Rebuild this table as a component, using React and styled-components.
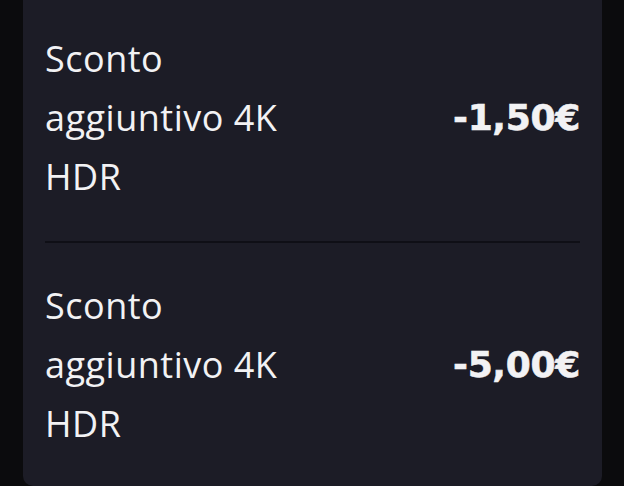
import React from "react";
import styled, { createGlobalStyle } from "styled-components";

const GlobalStyle = createGlobalStyle`
  html, body {
    margin: 0;
    padding: 0;
    background: #0b0b0d;
    overflow: hidden;
  }
  body {
    font-family: "Open Sans", "Noto Sans", sans-serif;
  }
`;

const discounts = [
  { id: 1, label: "Sconto aggiuntivo 4K HDR", amount: "-1,50€" },
  { id: 2, label: "Sconto aggiuntivo 4K HDR", amount: "-5,00€" },
];

export default function App() {
  return (
    <Page>
      <GlobalStyle />
      <Card>
        {discounts.map((d) => (
          <Row key={d.id}>
            <Label>{d.label}</Label>
            <Amount>{d.amount}</Amount>
          </Row>
        ))}
      </Card>
    </Page>
  );
}

const Page = styled.div`
  width: 624px;
  height: 486px;
  padding-left: 23px;
  box-sizing: border-box;
  overflow: hidden;
`;

const Card = styled.div`
  width: 579px;
  height: 500px;
  margin-top: -14px;
  box-sizing: border-box;
  background: #1c1c26;
  border-radius: 10px;
  padding: 11px 22px 0;
  display: flex;
  flex-direction: column;
`;

const Row = styled.div`
  display: flex;
  align-items: center;
  justify-content: space-between;
  padding: 33px 0 35px;
  border-bottom: 2px solid #0f0f16;
  &:first-child {
    padding-top: 32px;
  }
  &:last-child {
    border-bottom: none;
  }
`;

const Label = styled.div`
  width: 290px;
  color: #f2f2f4;
  font-size: 36px;
  line-height: 59px;
  font-weight: 400;
  letter-spacing: 0.5px;
`;

const Amount = styled.div`
  color: #f2f2f4;
  font-family: "DejaVu Sans", sans-serif;
  font-size: 36px;
  font-weight: 700;
  letter-spacing: -0.3px;
  -webkit-text-stroke: 0.6px #f2f2f4;
`;
